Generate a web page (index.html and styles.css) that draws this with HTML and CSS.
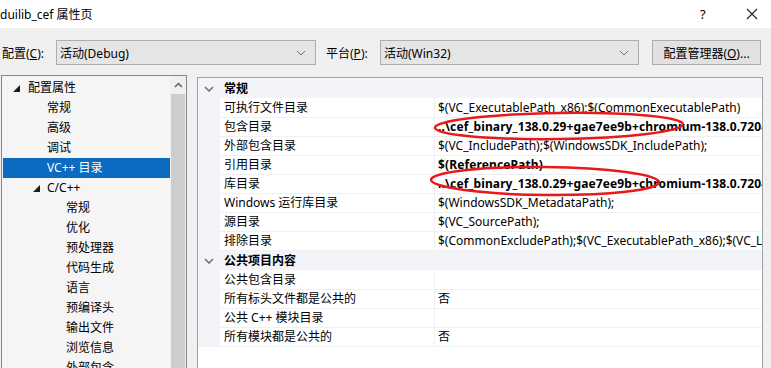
FILE: index.html
```html
<!DOCTYPE html>
<html>
<head>
    <title>duilib_cef 属性页</title>
    <link rel="stylesheet" href="styles.css">
</head>
<body>
    <div class="titlebar">
        <span class="title">duilib_cef 属性页</span>
        <span class="help">?</span>
        <span class="close">
            <svg width="12" height="12" viewBox="0 0 12 12"><path d="M1 1 L11 11 M11 1 L1 11" stroke="#222" stroke-width="1.1" fill="none"/></svg>
        </span>
    </div>

    <div class="main">
        <div class="config-row">
            <label class="lbl">配置(<u>C</u>):</label>
            <div class="combo combo-config">
                <span>活动(Debug)</span>
                <svg class="chev" width="10" height="6" viewBox="0 0 10 6"><path d="M1 1 L5 5 L9 1" stroke="#707070" stroke-width="1" fill="none"/></svg>
            </div>
            <label class="lbl lbl-platform">平台(<u>P</u>):</label>
            <div class="combo combo-platform">
                <span>活动(Win32)</span>
                <svg class="chev" width="10" height="6" viewBox="0 0 10 6"><path d="M1 1 L5 5 L9 1" stroke="#707070" stroke-width="1" fill="none"/></svg>
            </div>
            <button class="mgr-btn">配置管理器(<u>O</u>)...</button>
        </div>

        <div class="panes">
            <div class="tree">
                <div class="tree-items">
                    <div class="node lvl0"><span class="tri"><svg width="7" height="7" viewBox="0 0 7 7"><polygon points="7,0 7,7 0,7" fill="#1e1e1e"/></svg></span>配置属性</div>
                    <div class="node lvl1">常规</div>
                    <div class="node lvl1">高级</div>
                    <div class="node lvl1">调试</div>
                    <div class="node lvl1 selected">VC++ 目录</div>
                    <div class="node lvl1 parent"><span class="tri"><svg width="7" height="7" viewBox="0 0 7 7"><polygon points="7,0 7,7 0,7" fill="#1e1e1e"/></svg></span>C/C++</div>
                    <div class="node lvl2">常规</div>
                    <div class="node lvl2">优化</div>
                    <div class="node lvl2">预处理器</div>
                    <div class="node lvl2">代码生成</div>
                    <div class="node lvl2">语言</div>
                    <div class="node lvl2">预编译头</div>
                    <div class="node lvl2">输出文件</div>
                    <div class="node lvl2">浏览信息</div>
                    <div class="node lvl2">外部包含</div>
                </div>
                <div class="vscroll">
                    <div class="arrow-up">
                        <svg width="9" height="6" viewBox="0 0 9 6"><path d="M1 5 L4.5 1.5 L8 5" stroke="#606060" stroke-width="1.5" fill="none"/></svg>
                    </div>
                    <div class="thumb"></div>
                </div>
            </div>

            <div class="grid">
                <div class="row header">
                    <div class="gutter"><svg width="10" height="6" viewBox="0 0 10 6"><path d="M1 1 L5 5 L9 1" stroke="#6d6a85" stroke-width="1.5" fill="none"/></svg></div>
                    <div class="name">常规</div>
                </div>
                <div class="row"><div class="gutter"></div><div class="name">可执行文件目录</div><div class="value">$(VC_ExecutablePath_x86);$(CommonExecutablePath)</div></div>
                <div class="row"><div class="gutter"></div><div class="name">包含目录</div><div class="value bold">..\cef_binary_138.0.29+gae7ee9b+chromium-138.0.7204.97_windows32\include</div></div>
                <div class="row"><div class="gutter"></div><div class="name">外部包含目录</div><div class="value">$(VC_IncludePath);$(WindowsSDK_IncludePath);</div></div>
                <div class="row"><div class="gutter"></div><div class="name">引用目录</div><div class="value bold">$(ReferencePath)</div></div>
                <div class="row"><div class="gutter"></div><div class="name">库目录</div><div class="value bold">..\cef_binary_138.0.29+gae7ee9b+chromium-138.0.7204.97_windows32\Debug</div></div>
                <div class="row"><div class="gutter"></div><div class="name">Windows 运行库目录</div><div class="value">$(WindowsSDK_MetadataPath);</div></div>
                <div class="row"><div class="gutter"></div><div class="name">源目录</div><div class="value">$(VC_SourcePath);</div></div>
                <div class="row"><div class="gutter"></div><div class="name">排除目录</div><div class="value">$(CommonExcludePath);$(VC_ExecutablePath_x86);$(VC_LibraryPath_x86)</div></div>
                <div class="row header">
                    <div class="gutter"><svg width="10" height="6" viewBox="0 0 10 6"><path d="M1 1 L5 5 L9 1" stroke="#6d6a85" stroke-width="1.5" fill="none"/></svg></div>
                    <div class="name">公共项目内容</div>
                </div>
                <div class="row"><div class="gutter"></div><div class="name">公共包含目录</div><div class="value"></div></div>
                <div class="row"><div class="gutter"></div><div class="name">所有标头文件都是公共的</div><div class="value">否</div></div>
                <div class="row"><div class="gutter"></div><div class="name">公共 C++ 模块目录</div><div class="value"></div></div>
                <div class="row"><div class="gutter"></div><div class="name">所有模块都是公共的</div><div class="value">否</div></div>
            </div>
        </div>
    </div>

    <svg class="marks" width="771" height="368" viewBox="0 0 771 368">
        <ellipse cx="559" cy="126" rx="124" ry="13" transform="rotate(-0.8 559 126)" stroke="#e8191a" stroke-width="2.5" fill="none"/>
        <ellipse cx="545" cy="181" rx="114" ry="14" transform="rotate(0.6 545 181)" stroke="#e8191a" stroke-width="2.5" fill="none"/>
    </svg>
</body>
</html>
```

FILE: styles.css
```css
body {
    margin: 0;
    width: 771px;
    height: 368px;
    overflow: hidden;
    position: relative;
    background-color: #f0f0f0;
    font-family: "Noto Sans", "Noto Sans CJK SC", sans-serif;
    font-size: 12px;
    color: #000;
}

.titlebar {
    height: 28px;
    background-color: #fff;
    display: flex;
    align-items: center;
}

.title {
    flex: 1;
}

.help {
    width: 14px;
    margin-right: 32px;
    font-size: 13px;
}

.close {
    width: 12px;
    margin-right: 13px;
    display: flex;
}

.main {
    padding-top: 12px;
}

.config-row {
    display: flex;
    align-items: center;
    height: 25px;
    padding-left: 2px;
}

.lbl {
    width: 54px;
}

.lbl-platform {
    margin-left: 10px;
}

.combo {
    height: 25px;
    box-sizing: border-box;
    border: 1px solid #adadad;
    background-color: #e5e5e5;
    display: flex;
    align-items: center;
    justify-content: space-between;
    padding: 0 9px 0 3px;
}

.combo-config {
    width: 260px;
}

.combo-platform {
    width: 259px;
}

.mgr-btn {
    margin-left: 13px;
    width: 109px;
    height: 25px;
    border: 1px solid #adadad;
    background-color: #e1e1e1;
    font-family: inherit;
    font-size: 12px;
    padding: 0;
}

.panes {
    display: flex;
    align-items: flex-start;
    margin-top: 10px;
}

.tree {
    margin-left: 1px;
    width: 186px;
    height: 310px;
    box-sizing: border-box;
    border: 1px solid #828790;
    background-color: #f5f5f5;
    display: flex;
}

.tree-items {
    flex: 1;
    padding: 2px 0 0 1px;
}

.node {
    height: 20px;
    line-height: 20px;
    white-space: nowrap;
    position: relative;
}

.lvl0 {
    padding-left: 25px;
}

.lvl1 {
    padding-left: 44px;
}

.lvl2 {
    padding-left: 63px;
}

.tri {
    position: absolute;
    top: 7px;
    display: flex;
}

.lvl0 .tri {
    left: 10px;
}

.parent .tri {
    left: 30px;
}

.selected {
    background-color: #0a6bc1;
    color: #fff;
}

.vscroll {
    width: 16px;
    display: flex;
    flex-direction: column;
    background-color: #f0f0f0;
}

.arrow-up {
    height: 18px;
    display: flex;
    align-items: center;
    justify-content: center;
}

.thumb {
    flex: 1;
    background-color: #cdcdcd;
    margin: 0 1px;
}

.grid {
    margin-left: 10px;
    margin-top: 2px;
    width: 566px;
    height: 310px;
    box-sizing: border-box;
    border: 1px solid #a0a0a0;
    background-color: #fff;
}

.row {
    display: grid;
    grid-template-columns: 22px 214px 1fr;
    height: 19px;
    line-height: 18px;
}

.row.header {
    height: 20px;
    line-height: 21px;
    background-color: #f2f4f7;
    font-weight: bold;
}

.gutter {
    background-color: #f2f4f7;
    display: flex;
    align-items: center;
    justify-content: center;
}

.name {
    padding: 1px 0 0 4px;
    white-space: nowrap;
    border-bottom: 1px solid #eef0f3;
}

.header .name {
    padding-top: 0;
    border-bottom: none;
}

.value {
    padding: 1px 0 0 3px;
    white-space: nowrap;
    overflow: hidden;
    border-left: 1px solid #eef0f3;
    border-bottom: 1px solid #eef0f3;
}

.bold {
    font-weight: bold;
    letter-spacing: 0.12px;
}

.marks {
    position: absolute;
    top: 0;
    left: 0;
    pointer-events: none;
}
```
